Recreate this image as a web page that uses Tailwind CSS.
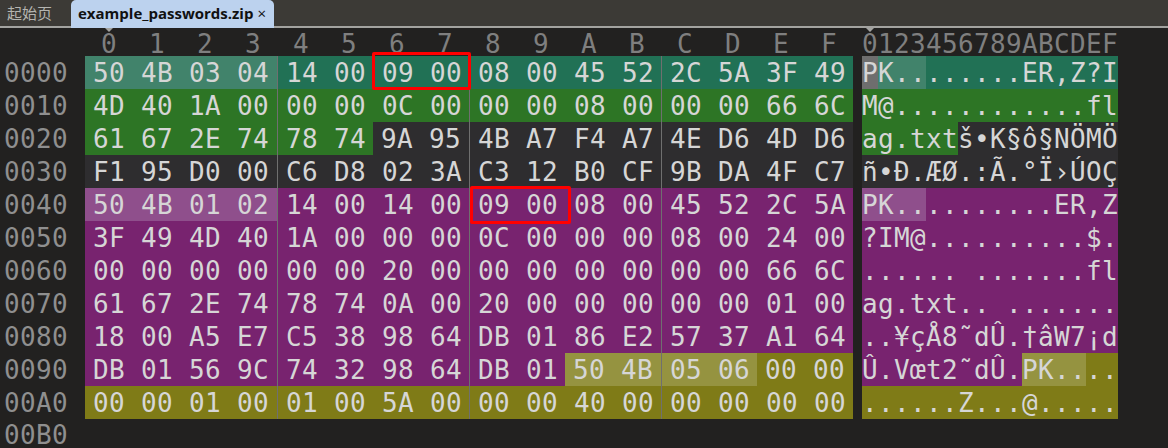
<!DOCTYPE html>
<html><head><meta charset="utf-8"><script src="https://cdn.jsdelivr.net/npm/@tailwindcss/browser@4"></script></head>
<body class="m-0 bg-[#222120]">
<div class="relative flex flex-col w-[1168px] h-[448px] overflow-hidden bg-[#222120] font-['DejaVu_Sans_Mono',monospace] text-[26px] tracking-[0.35px] leading-[35px] text-[#d6d6d6] whitespace-pre">
  <div class="relative flex items-start shrink-0 h-[28px] bg-[#3c3a36] border-b-2 border-[#a3a3a0] text-[15px] tracking-normal leading-[26px]">
    <div class="w-[71px] h-[26px] pl-[7px] text-[#b4b4b0] font-['Noto_Sans_CJK_SC',sans-serif]">起始页</div>
    <div class="flex h-[28px] w-[203px] pl-[7px] rounded-t-[5px] bg-[#bcd2ee] text-[#111] font-bold leading-[27px] font-['Open_Sans',sans-serif] text-[15px]">example_passwords.zip<span class="ml-[4px] font-normal">×</span></div>
  </div>
  <div class="flex shrink-0 h-[28px] text-[#7f7f7f] leading-[33px]">
    <div class="w-[101px] shrink-0"></div>
    <div class="w-[761px] shrink-0 tracking-[32.35px]">0123456789ABCDEF</div>
    <div>0123456789ABCDEF</div>
  </div>
  <div class="flex shrink-0 h-[33px]"><div class="w-[85px] pl-[4px] text-[#8f8f8f]">0000</div>
    <div class="w-[192px] pl-2 bg-[#41836b]">50 4B 03 04</div><div class="w-[192px] pl-2 bg-[#217155] border-l border-[#6f6f6f]">14 00 09 00</div><div class="w-[192px] pl-2 bg-[#217155] border-l border-[#6f6f6f]">08 00 45 52</div><div class="w-[192px] pl-2 bg-[#217155] border-l border-[#6f6f6f]">2C 5A 3F 49</div>
    <div class="w-[9px]"></div><div class="w-[16px] bg-[#6e6e6e]">P</div><div class="w-[48px] bg-[#41836b]">K..</div><div class="w-[192px] bg-[#217155]">......ER,Z?I</div></div>
  <div class="flex shrink-0 h-[33px]"><div class="w-[85px] pl-[4px] text-[#8f8f8f]">0010</div>
    <div class="w-[192px] pl-2 bg-[#2d7525]">4D 40 1A 00</div><div class="w-[192px] pl-2 bg-[#2d7525] border-l border-[#6f6f6f]">00 00 0C 00</div><div class="w-[192px] pl-2 bg-[#2d7525] border-l border-[#6f6f6f]">00 00 08 00</div><div class="w-[192px] pl-2 bg-[#2d7525] border-l border-[#6f6f6f]">00 00 66 6C</div>
    <div class="w-[9px]"></div><div class="w-[256px] bg-[#2d7525]">M@............fl</div></div>
  <div class="flex shrink-0 h-[33px]"><div class="w-[85px] pl-[4px] text-[#8f8f8f]">0020</div>
    <div class="w-[192px] pl-2 bg-[#2d7525]">61 67 2E 74</div><div class="w-[96px] pl-2 bg-[#2d7525] border-l border-[#6f6f6f]">78 74</div><div class="w-[96px] pl-2 bg-[#2e2d2f]">9A 95</div><div class="w-[192px] pl-2 bg-[#2e2d2f] border-l border-[#6f6f6f]">4B A7 F4 A7</div><div class="w-[192px] pl-2 bg-[#2e2d2f] border-l border-[#6f6f6f]">4E D6 4D D6</div>
    <div class="w-[9px]"></div><div class="w-[96px] bg-[#2d7525]">ag.txt</div><div class="w-[160px] bg-[#2e2d2f]">š•K§ô§NÖMÖ</div></div>
  <div class="flex shrink-0 h-[33px]"><div class="w-[85px] pl-[4px] text-[#8f8f8f]">0030</div>
    <div class="w-[192px] pl-2 bg-[#2e2d2f]">F1 95 D0 00</div><div class="w-[192px] pl-2 bg-[#2e2d2f] border-l border-[#6f6f6f]">C6 D8 02 3A</div><div class="w-[192px] pl-2 bg-[#2e2d2f] border-l border-[#6f6f6f]">C3 12 B0 CF</div><div class="w-[192px] pl-2 bg-[#2e2d2f] border-l border-[#6f6f6f]">9B DA 4F C7</div>
    <div class="w-[9px]"></div><div class="w-[256px] bg-[#2e2d2f]">ñ•Ð.ÆØ.:Ã.°Ï›ÚOÇ</div></div>
  <div class="flex shrink-0 h-[33px]"><div class="w-[85px] pl-[4px] text-[#8f8f8f]">0040</div>
    <div class="w-[192px] pl-2 bg-[#8f4f8c]">50 4B 01 02</div><div class="w-[192px] pl-2 bg-[#78236f] border-l border-[#6f6f6f]">14 00 14 00</div><div class="w-[192px] pl-2 bg-[#78236f] border-l border-[#6f6f6f]">09 00 08 00</div><div class="w-[192px] pl-2 bg-[#78236f] border-l border-[#6f6f6f]">45 52 2C 5A</div>
    <div class="w-[9px]"></div><div class="w-[64px] bg-[#8f4f8c]">PK..</div><div class="w-[192px] bg-[#78236f]">........ER,Z</div></div>
  <div class="flex shrink-0 h-[33px]"><div class="w-[85px] pl-[4px] text-[#8f8f8f]">0050</div>
    <div class="w-[192px] pl-2 bg-[#78236f]">3F 49 4D 40</div><div class="w-[192px] pl-2 bg-[#78236f] border-l border-[#6f6f6f]">1A 00 00 00</div><div class="w-[192px] pl-2 bg-[#78236f] border-l border-[#6f6f6f]">0C 00 00 00</div><div class="w-[192px] pl-2 bg-[#78236f] border-l border-[#6f6f6f]">08 00 24 00</div>
    <div class="w-[9px]"></div><div class="w-[256px] bg-[#78236f]">?IM@..........$.</div></div>
  <div class="flex shrink-0 h-[33px]"><div class="w-[85px] pl-[4px] text-[#8f8f8f]">0060</div>
    <div class="w-[192px] pl-2 bg-[#78236f]">00 00 00 00</div><div class="w-[192px] pl-2 bg-[#78236f] border-l border-[#6f6f6f]">00 00 20 00</div><div class="w-[192px] pl-2 bg-[#78236f] border-l border-[#6f6f6f]">00 00 00 00</div><div class="w-[192px] pl-2 bg-[#78236f] border-l border-[#6f6f6f]">00 00 66 6C</div>
    <div class="w-[9px]"></div><div class="w-[256px] bg-[#78236f]">...... .......fl</div></div>
  <div class="flex shrink-0 h-[33px]"><div class="w-[85px] pl-[4px] text-[#8f8f8f]">0070</div>
    <div class="w-[192px] pl-2 bg-[#78236f]">61 67 2E 74</div><div class="w-[192px] pl-2 bg-[#78236f] border-l border-[#6f6f6f]">78 74 0A 00</div><div class="w-[192px] pl-2 bg-[#78236f] border-l border-[#6f6f6f]">20 00 00 00</div><div class="w-[192px] pl-2 bg-[#78236f] border-l border-[#6f6f6f]">00 00 01 00</div>
    <div class="w-[9px]"></div><div class="w-[256px] bg-[#78236f]">ag.txt.. .......</div></div>
  <div class="flex shrink-0 h-[33px]"><div class="w-[85px] pl-[4px] text-[#8f8f8f]">0080</div>
    <div class="w-[192px] pl-2 bg-[#78236f]">18 00 A5 E7</div><div class="w-[192px] pl-2 bg-[#78236f] border-l border-[#6f6f6f]">C5 38 98 64</div><div class="w-[192px] pl-2 bg-[#78236f] border-l border-[#6f6f6f]">DB 01 86 E2</div><div class="w-[192px] pl-2 bg-[#78236f] border-l border-[#6f6f6f]">57 37 A1 64</div>
    <div class="w-[9px]"></div><div class="w-[256px] bg-[#78236f]">..¥çÅ8˜dÛ.†âW7¡d</div></div>
  <div class="flex shrink-0 h-[33px]"><div class="w-[85px] pl-[4px] text-[#8f8f8f]">0090</div>
    <div class="w-[192px] pl-2 bg-[#78236f]">DB 01 56 9C</div><div class="w-[192px] pl-2 bg-[#78236f] border-l border-[#6f6f6f]">74 32 98 64</div><div class="w-[96px] pl-2 bg-[#78236f] border-l border-[#6f6f6f]">DB 01</div><div class="w-[96px] pl-2 bg-[#959340]">50 4B</div><div class="w-[96px] pl-2 bg-[#959340] border-l border-[#6f6f6f]">05 06</div><div class="w-[96px] pl-2 bg-[#7f7b17]">00 00</div>
    <div class="w-[9px]"></div><div class="w-[160px] bg-[#78236f]">Û.Vœt2˜dÛ.</div><div class="w-[64px] bg-[#959340]">PK..</div><div class="w-[32px] bg-[#7f7b17]">..</div></div>
  <div class="flex shrink-0 h-[33px]"><div class="w-[85px] pl-[4px] text-[#8f8f8f]">00A0</div>
    <div class="w-[192px] pl-2 bg-[#7f7b17]">00 00 01 00</div><div class="w-[192px] pl-2 bg-[#7f7b17] border-l border-[#6f6f6f]">01 00 5A 00</div><div class="w-[192px] pl-2 bg-[#7f7b17] border-l border-[#6f6f6f]">00 00 40 00</div><div class="w-[192px] pl-2 bg-[#7f7b17] border-l border-[#6f6f6f]">00 00 00 00</div>
    <div class="w-[9px]"></div><div class="w-[256px] bg-[#7f7b17]">......Z...@.....</div></div>
  <div class="flex shrink-0 h-[29px] pt-[4px] leading-[25px]"><div class="w-[85px] pl-[4px] text-[#8f8f8f]">00B0</div></div>
  <div class="absolute left-[105px] top-[28px] w-0 h-0 border-x-[4px] border-x-transparent border-t-[4px] border-t-[#a3a3a0]"></div>
  <div class="absolute left-[866px] top-[28px] w-0 h-0 border-x-[4px] border-x-transparent border-t-[4px] border-t-[#a3a3a0]"></div>
  <div class="absolute left-[372px] top-[52px] w-[99px] h-[38px] border-[3px] border-[#ff0000] rounded-[2px]"></div>
  <div class="absolute left-[470px] top-[186px] w-[101px] h-[38px] border-[3px] border-[#ff0000] rounded-[2px]"></div>
</div>
</body></html>
